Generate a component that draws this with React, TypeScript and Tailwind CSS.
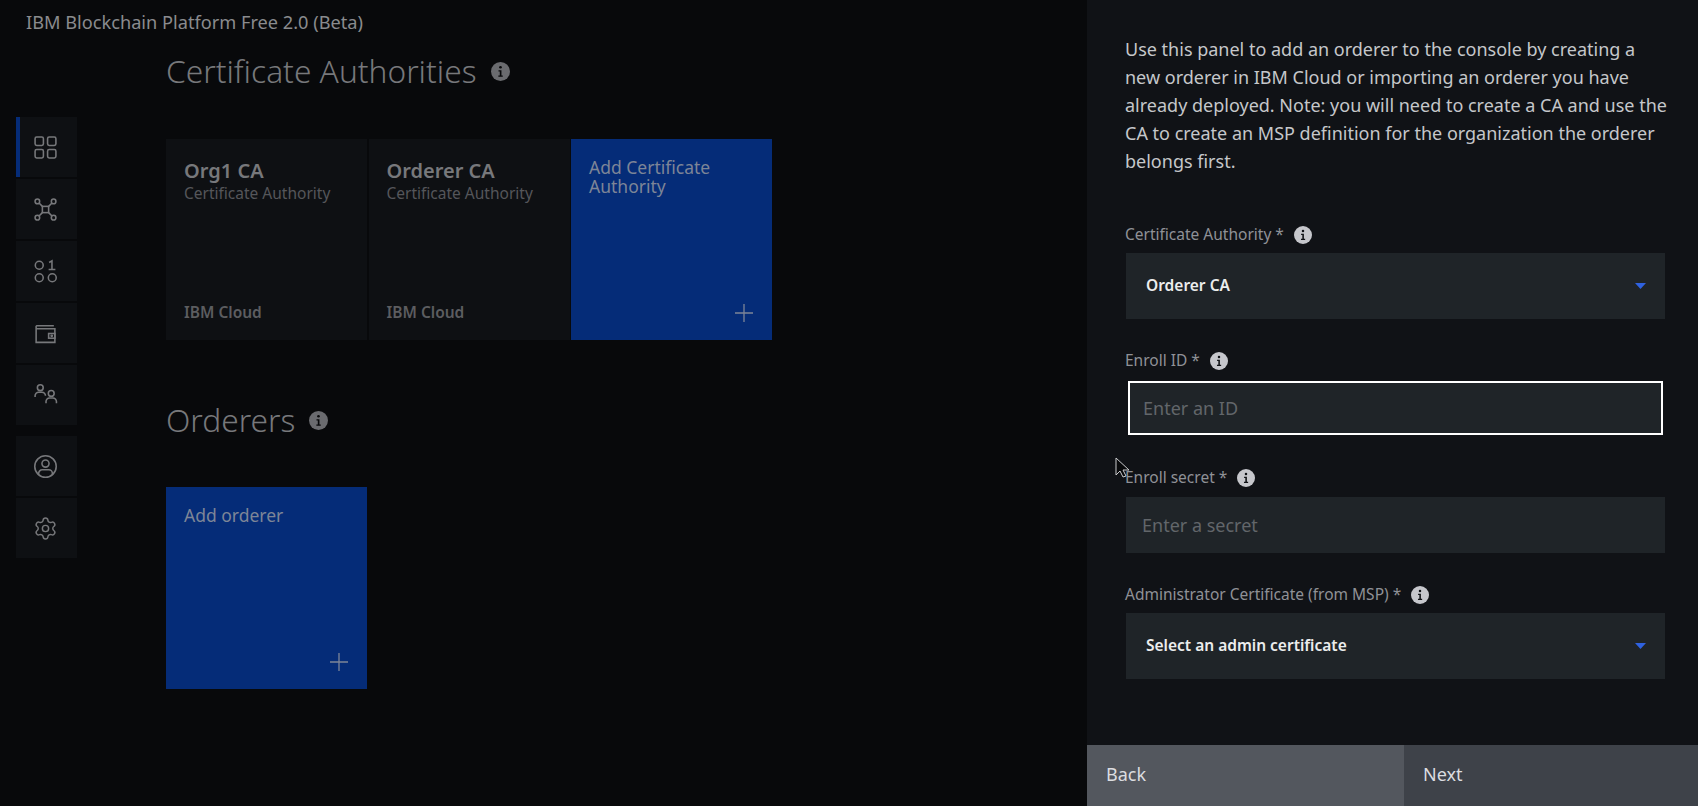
import React from 'react';
import { Settings } from 'lucide-react';

const InfoIcon: React.FC<{ size: number; color: string; dark: string }> = ({ size, color, dark }) => (
  <svg width={size} height={size} viewBox="0 0 16 16" className="shrink-0">
    <circle cx="8" cy="8" r="8" fill={color} />
    <circle cx="8" cy="4.4" r="1.1" fill={dark} />
    <path d="M6.3 6.9h2.5v4.4h1.1v1.2H6.2v-1.2h1.2V8.1H6.3z" fill={dark} />
  </svg>
);

const iconProps = {
  width: 25,
  height: 25,
  viewBox: '0 0 24 24',
  fill: 'none',
  stroke: '#77787b',
  strokeWidth: 1.5,
};

const DashboardIcon = () => (
  <svg {...iconProps}>
    <rect x="2" y="2" width="8" height="8" rx="1.5" />
    <rect x="14" y="2" width="8" height="8" rx="1.5" />
    <rect x="2" y="14" width="8" height="8" rx="1.5" />
    <rect x="14" y="14" width="8" height="8" rx="1.5" />
  </svg>
);

const NodesIcon = () => (
  <svg {...iconProps}>
    <rect x="9" y="9" width="6" height="6" />
    <circle cx="4.2" cy="4.2" r="2.2" />
    <circle cx="19.8" cy="4.2" r="2.2" />
    <circle cx="4.2" cy="19.8" r="2.2" />
    <circle cx="19.8" cy="19.8" r="2.2" />
    <path d="M5.8 5.8 9 9M18.2 5.8 15 9M5.8 18.2 9 15M18.2 18.2 15 15" />
  </svg>
);

const BinaryIcon = () => (
  <svg {...iconProps}>
    <circle cx="6" cy="6" r="3.8" />
    <circle cx="6" cy="18" r="3.8" />
    <circle cx="18.5" cy="18" r="3.8" />
    <path d="M15.5 3.4 18.2 1.8V10M15 10h6.5" />
  </svg>
);

const WalletIcon = () => (
  <svg {...iconProps}>
    <path d="M3 4.5h17M3 4.5v16h18V7.5H3" />
    <rect x="15" y="12" width="6" height="4.5" />
    <circle cx="18" cy="14.2" r="0.6" />
  </svg>
);

const UsersIcon = () => (
  <svg {...iconProps}>
    <circle cx="7" cy="4.5" r="2.8" />
    <path d="M2 13.5v-1.2a3.4 3.4 0 0 1 3.4-3.4h3.2a3.4 3.4 0 0 1 3.4 3.4" />
    <circle cx="17.5" cy="10" r="2.8" />
    <path d="M12.5 19.5v-1.7a3.4 3.4 0 0 1 3.4-3.4h3.2a3.4 3.4 0 0 1 3.4 3.4v1.7" />
  </svg>
);

const AvatarIcon = () => (
  <svg {...iconProps}>
    <circle cx="12" cy="12" r="10.3" />
    <circle cx="12" cy="9.2" r="3.4" />
    <path d="M5.4 19.6v-1a3.4 3.4 0 0 1 3.4-3.4h6.4a3.4 3.4 0 0 1 3.4 3.4v1" />
  </svg>
);

const PlusIcon = () => (
  <svg width="20" height="20" viewBox="0 0 20 20" stroke="#7d8597" strokeWidth="1.3">
    <path d="M10 1v18M1 10h18" />
  </svg>
);

const CaretIcon = () => (
  <svg width="11" height="6" viewBox="0 0 11 6">
    <path d="M0 0h11L5.5 6z" fill="#2f62e0" />
  </svg>
);

const NavItem: React.FC<{ active?: boolean; className?: string; children: React.ReactNode }> = ({ active, className, children }) => (
  <div className={`relative flex h-[60px] w-[61px] items-center justify-center bg-[#0e1013] pr-[3px] ${className ?? ''}`}>
    {active && <div className="absolute left-0 top-0 h-full w-[4px] bg-[#052c78]" />}
    {children}
  </div>
);

const CaCard: React.FC<{ name: string }> = ({ name }) => (
  <div className="flex h-[201px] w-[201px] flex-col justify-between bg-[#0e1013] pb-[19px] pl-[18px] pr-[10px] pt-[20px]">
    <div>
      <div className="text-[20px] font-semibold leading-[24px] text-[#77787b]">{name}</div>
      <div className="mt-px text-[15.5px] leading-[19px] text-[#55565a]">Certificate Authority</div>
    </div>
    <div className="text-[15.5px] font-semibold leading-[18px] text-[#5c5d60]">IBM Cloud</div>
  </div>
);

const AddCard: React.FC<{ label: string; h: string }> = ({ label, h }) => (
  <div className={`flex ${h} w-[201px] flex-col justify-between bg-[#052c78] pb-[17px] pl-[18px] pr-[18px] pt-[19px]`}>
    <div className="text-[17.5px] leading-[19px] text-[#7d8597]">{label}</div>
    <div className="flex justify-end">
      <PlusIcon />
    </div>
  </div>
);

const SectionTitle: React.FC<{ title: string }> = ({ title }) => (
  <div className="flex h-[50px] items-center gap-[14px]">
    <h2 className="text-[31.7px] font-light text-[#77787b]">{title}</h2>
    <InfoIcon size={19} color="#6a6b6f" dark="#08090b" />
  </div>
);

const FieldLabel: React.FC<{ label: string }> = ({ label }) => (
  <div className="flex h-[20px] items-center gap-[10px] text-[15.5px] text-[#8f9196]">
    <span>{label}</span>
    <InfoIcon size={18} color="#c6c7cc" dark="#101216" />
  </div>
);

const SelectBox: React.FC<{ value: string }> = ({ value }) => (
  <div className="ml-px mt-[8px] flex h-[66px] items-center justify-between bg-[#1f2428] pl-[20px] pr-[19px]">
    <span className="text-[15.5px] font-semibold text-[#eceded]">{value}</span>
    <CaretIcon />
  </div>
);

const Cursor = () => (
  <svg width="16" height="22" viewBox="0 0 16 22" className="absolute left-[1115px] top-[457px]">
    <path d="M1 1v17l4-4 3 6 3-1-3-6h6z" fill="#08090b" stroke="#c9cacc" strokeWidth="1" />
  </svg>
);

const App: React.FC = () => {
  return (
    <div className="relative flex h-[806px] w-[1698px] overflow-hidden bg-[#08090b] font-['Noto_Sans',sans-serif]">
      <div className="w-[1087px] shrink-0">
        <header className="flex h-[46px] items-center pl-[26px] text-[18.2px] text-[#8a8b8e]">
          IBM Blockchain Platform Free 2.0 (Beta)
        </header>
        <div className="flex">
          <nav className="ml-[16px] mt-[71px] flex w-[61px] flex-col gap-[2px]">
            <NavItem active><DashboardIcon /></NavItem>
            <NavItem><NodesIcon /></NavItem>
            <NavItem><BinaryIcon /></NavItem>
            <NavItem><WalletIcon /></NavItem>
            <NavItem><UsersIcon /></NavItem>
            <NavItem className="mt-[9px]"><AvatarIcon /></NavItem>
            <NavItem><Settings size={25} strokeWidth={1.4} color="#77787b" /></NavItem>
          </nav>
          <main className="ml-[89px]">
            <SectionTitle title="Certificate Authorities" />
            <div className="mt-[43px] flex gap-[1.5px]">
              <CaCard name="Org1 CA" />
              <CaCard name="Orderer CA" />
              <AddCard label="Add Certificate Authority" h="h-[201px]" />
            </div>
            <div className="mt-[55px]">
              <SectionTitle title="Orderers" />
            </div>
            <div className="mt-[42px]">
              <AddCard label="Add orderer" h="h-[202px]" />
            </div>
          </main>
        </div>
      </div>

      <aside className="flex w-[611px] flex-col bg-[#101216]">
        <div className="flex-1 pl-[38px] pr-[33px] pt-[35px]">
          <p className="w-[542px] text-[18px] leading-[28px] text-[#c5c7ca]">
            Use this panel to add an orderer to the console by creating a new orderer in IBM Cloud or importing an orderer you have already deployed. Note: you will need to create a CA and use the CA to create an MSP definition for the organization the orderer belongs first.
          </p>
          <div className="mt-[50px]">
            <FieldLabel label="Certificate Authority *" />
            <SelectBox value="Orderer CA" />
          </div>
          <div className="mt-[32px]">
            <FieldLabel label="Enroll ID *" />
            <input
              placeholder="Enter an ID"
              className="ml-[3px] mt-[10px] block h-[54px] w-[535px] border-2 border-white bg-[#1f2428] pl-[13px] text-[18px] outline-none placeholder:text-[#62666a]"
            />
          </div>
          <div className="mt-[33px]">
            <FieldLabel label="Enroll secret *" />
            <input
              placeholder="Enter a secret"
              className="ml-px mt-[9px] block h-[56px] w-[539px] bg-[#1f2428] pl-[16px] text-[18px] outline-none placeholder:text-[#62666a]"
            />
          </div>
          <div className="mt-[32px]">
            <FieldLabel label="Administrator Certificate (from MSP) *" />
            <SelectBox value="Select an admin certificate" />
          </div>
        </div>
        <div className="flex h-[61px] text-[18px] text-[#dcdde0]">
          <button className="w-[317px] bg-[#53575e] pb-[2px] pl-[19px] text-left">Back</button>
          <button className="flex-1 bg-[#3e4249] pb-[2px] pl-[19px] text-left">Next</button>
        </div>
      </aside>
      <Cursor />
    </div>
  );
};

export default App;
